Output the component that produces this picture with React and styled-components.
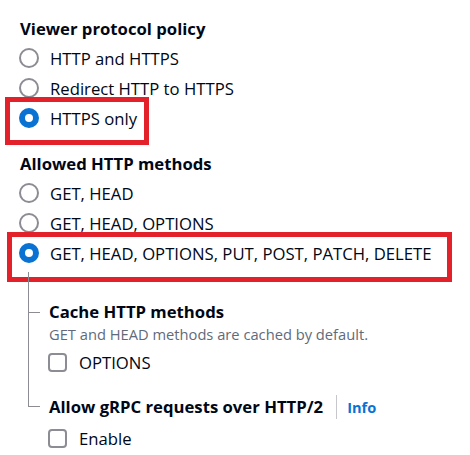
import React from 'react';
import styled, { createGlobalStyle, css } from 'styled-components';

const GlobalStyle = createGlobalStyle`
  body {
    margin: 0;
    background: #ffffff;
    font-family: "Open Sans", "Noto Sans", sans-serif;
    color: #000716;
  }
`;

const Page = styled.div`
  padding: 18px 0 0 19px;
`;

const Group = styled.div`
  display: flex;
  flex-direction: column;
  margin-bottom: ${(p) => p.gap || 0}px;
`;

const Heading = styled.div`
  font-size: 16.7px;
  font-weight: 700;
  line-height: 22px;
  margin-left: 1px;
  margin-bottom: 3px;
  display: flex;
  align-items: center;
`;

const Option = styled.label`
  position: relative;
  display: flex;
  align-items: center;
  gap: 11px;
  height: 30px;
  width: fit-content;
  font-size: 16.7px;
  white-space: nowrap;

  ${(p) =>
    p.mark &&
    css`
      &::after {
        content: '';
        position: absolute;
        top: ${-p.mark.t}px;
        left: ${-p.mark.l}px;
        right: ${-p.mark.r}px;
        bottom: ${-p.mark.b}px;
        border: 5px solid #e3212a;
        pointer-events: none;
      }
    `}
`;

const Radio = styled.span`
  box-sizing: border-box;
  width: 20px;
  height: 20px;
  border-radius: 50%;
  flex: none;
  background: #ffffff;
  border: ${(p) => (p.checked ? '6.5px solid #0972d3' : '2px solid #8c8c94')};
`;

const Check = styled.span`
  box-sizing: border-box;
  width: 19px;
  height: 19px;
  border-radius: 4px;
  flex: none;
  border: 2px solid #8c8c94;
  background: #ffffff;
`;

const Tree = styled.div`
  margin-left: 9px;
  padding-top: 4px;
`;

const Branch = styled.div`
  position: relative;
  padding: ${(p) => (p.first ? 29 : 18)}px 0 0 21px;

  &::before {
    content: '';
    position: absolute;
    left: 0;
    top: 0;
    width: 11px;
    border-left: 1px solid #8c8c94;
    border-bottom: ${(p) => (p.last ? '1px solid #8c8c94' : 'none')};
    height: ${(p) => (p.last ? `${p.first ? 40 : 29}px` : '100%')};
  }

  ${(p) =>
    !p.last &&
    css`
      &::after {
        content: '';
        position: absolute;
        left: 0;
        top: ${p.first ? 40 : 29}px;
        width: 12px;
        border-top: 1px solid #8c8c94;
      }
    `}
`;

const SubHeading = styled(Heading)`
  margin: 0;
`;

const Description = styled.div`
  font-size: 14.7px;
  line-height: 20px;
  color: #5f6b7a;
  margin-top: 1px;
`;

const CheckRow = styled.label`
  display: flex;
  align-items: center;
  gap: 12px;
  height: 30px;
  margin-top: ${(p) => p.offset || 3}px;
  font-size: 16.7px;
  margin-left: -1px;
`;

const Divider = styled.span`
  width: 1px;
  height: 24px;
  background: #c6c6cd;
  margin: 0 10px 0 13px;
`;

const InfoLink = styled.span`
  font-size: 14.6px;
  font-weight: 700;
  color: #0972d3;
`;

const viewerOptions = [
  { label: 'HTTP and HTTPS' },
  { label: 'Redirect HTTP to HTTPS' },
  { label: 'HTTPS only', checked: true, mark: { t: 6, l: 14, r: 12, b: 12 } },
];

const methodOptions = [
  { label: 'GET, HEAD' },
  { label: 'GET, HEAD, OPTIONS' },
  {
    label: 'GET, HEAD, OPTIONS, PUT, POST, PATCH, DELETE',
    checked: true,
    mark: { t: 6, l: 12, r: 20, b: 14 },
  },
];

function RadioGroup({ title, options, gap }) {
  return (
    <Group gap={gap}>
      <Heading>{title}</Heading>
      {options.map((o) => (
        <Option key={o.label} mark={o.mark}>
          <Radio checked={o.checked} />
          {o.label}
        </Option>
      ))}
    </Group>
  );
}

export default function App() {
  return (
    <>
      <GlobalStyle />
      <Page>
        <RadioGroup title="Viewer protocol policy" options={viewerOptions} gap={20} />
        <RadioGroup title="Allowed HTTP methods" options={methodOptions} />
        <Tree>
          <Branch first>
            <SubHeading>Cache HTTP methods</SubHeading>
            <Description>GET and HEAD methods are cached by default.</Description>
            <CheckRow>
              <Check />
              OPTIONS
            </CheckRow>
          </Branch>
          <Branch last>
            <SubHeading>
              Allow gRPC requests over HTTP/2
              <Divider />
              <InfoLink>Info</InfoLink>
            </SubHeading>
            <CheckRow offset={4}>
              <Check />
              Enable
            </CheckRow>
          </Branch>
        </Tree>
      </Page>
    </>
  );
}
